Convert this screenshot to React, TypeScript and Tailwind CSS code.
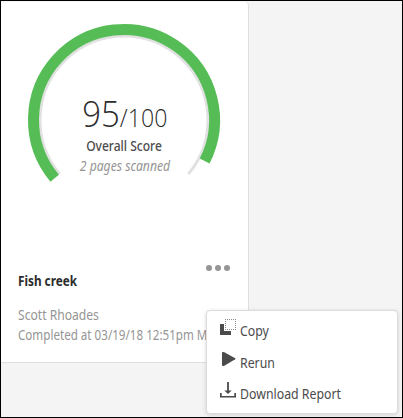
import React from "react";

const CX = 124;
const CY = 120;

function arc(radius: number, from: number, to: number) {
  const point = (deg: number) => {
    const a = (deg * Math.PI) / 180;
    return `${(CX + radius * Math.cos(a)).toFixed(2)} ${(CY + radius * Math.sin(a)).toFixed(2)}`;
  };
  return `M${point(from)} A${radius} ${radius} 0 1 1 ${point(to)}`;
}

function Gauge({ score }: { score: number }) {
  return (
    <svg className="block" width="247" height="198" viewBox="1 2 247 198" fill="none">
      <path d={arc(84, 140, 400)} stroke="#e1e1e1" strokeWidth="3" />
      <path d={arc(90.5, 140, 140 + 2.6 * score)} stroke="#56bd56" strokeWidth="11" />
    </svg>
  );
}

function CopyIcon() {
  return (
    <svg className="shrink-0" width="18" height="18" viewBox="0 0 18 18" shapeRendering="crispEdges">
      <path d="M1 6h4v7h7v4H1z" fill="#4b4b4b" />
      <path d="M6 1.5h11M6 11.5h11M6.5 1v11M16.5 1v11" stroke="#8a8a8a" strokeDasharray="1 1" />
    </svg>
  );
}

function PlayIcon() {
  return (
    <svg className="shrink-0" width="18" height="18" viewBox="0 0 18 18">
      <path d="M3 2.8q0-.9.9-.9h1L16.2 8.3q.8.5 0 1L4.9 15.9h-1q-.9 0-.9-.9z" fill="#4b4b4b" />
    </svg>
  );
}

function DownloadIcon() {
  return (
    <svg className="shrink-0" width="18" height="18" viewBox="0 0 18 18" fill="#4b4b4b">
      <path d="M8.1 1h1.8v8.5h2.8L9 13 5.3 9.5h2.8zM1 12h1.7v3h12.6v-3H17v4.6H1z" />
    </svg>
  );
}

function MenuItem({ icon, children }: { icon: React.ReactNode; children: string }) {
  return (
    <button className="flex h-8 items-start gap-[3px] text-left">
      {icon}
      <span className="mt-[3px] origin-left scale-x-[0.88] text-[14px] leading-5 whitespace-nowrap text-[#4b4b4b]">{children}</span>
    </button>
  );
}

export default function App() {
  return (
    <div className="relative h-[418px] w-[403px] overflow-hidden border border-black bg-[#f4f4f4] pt-px font-['Noto_Sans',sans-serif]">
      <div className="h-[361px] w-[248px] rounded-tr border-r border-b border-[#dfdfdf] bg-white">
        <div className="grid">
          <div className="col-start-1 row-start-1">
            <Gauge score={95} />
          </div>
          <div className="col-start-1 row-start-1 flex flex-col items-center pt-[90px] text-center whitespace-nowrap">
            <div className="flex h-11 scale-x-[0.89] items-baseline font-['Open_Sans',sans-serif] leading-[42px] font-light text-[#2c2c2c]">
              <span className="text-[37px]">95</span>
              <span className="text-[26px]">/100</span>
            </div>
            <div className="scale-x-[0.86] text-[14px] leading-5 font-medium text-[#4b4b4b]">Overall Score</div>
            <div className="scale-x-[0.87] text-[14px] leading-5 text-[#959595] italic">2 pages scanned</div>
          </div>
        </div>
        <div className="flex justify-end pt-[65px] pr-[18px]">
          <div className="flex gap-[3px]">
            <span className="size-1.5 rounded-full bg-[#959595]" />
            <span className="size-1.5 rounded-full bg-[#959595]" />
            <span className="size-1.5 rounded-full bg-[#959595]" />
          </div>
        </div>
        <div className="pl-[17px] text-[14px] leading-5 whitespace-nowrap">
          <div className="origin-left scale-x-[0.84] font-bold text-[#2c2c2c]">Fish creek</div>
          <div className="mt-3.5 origin-left scale-x-[0.865] text-[#959595]">Scott Rhoades</div>
          <div className="origin-left scale-x-[0.83] text-[#959595]">Completed at 03/19/18 12:51pm MST</div>
        </div>
      </div>
      <div className="absolute top-[309px] left-[205px] flex h-[104px] w-[192px] flex-col rounded border border-[#dcdcdc] bg-white pt-[7px] pl-3 shadow-[0_1px_4px_rgba(0,0,0,0.15)]">
        <MenuItem icon={<CopyIcon />}>Copy</MenuItem>
        <MenuItem icon={<PlayIcon />}>Rerun</MenuItem>
        <MenuItem icon={<DownloadIcon />}>Download Report</MenuItem>
      </div>
    </div>
  );
}
